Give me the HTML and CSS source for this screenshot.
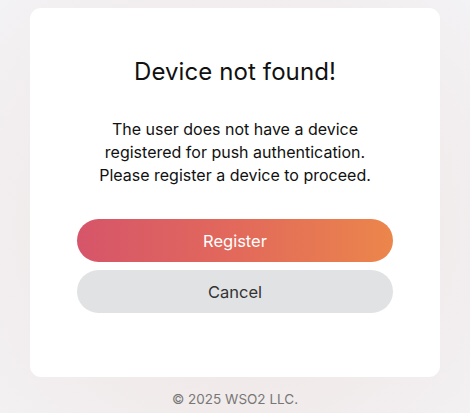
FILE: index.html
```html
<!DOCTYPE html>
<html>
<head>
<meta charset="utf-8">
<link rel="stylesheet" href="styles.css">
</head>
<body>
<div class="page">
  <div class="card">
    <h1 class="title">Device not found!</h1>
    <p class="message">The user does not have a device<br>registered for push authentication.<br>Please register a device to proceed.</p>
    <div class="actions">
      <button class="btn btn-primary">Register</button>
      <button class="btn btn-secondary">Cancel</button>
    </div>
  </div>
  <footer class="footer">© 2025 WSO2 LLC.</footer>
</div>
</body>
</html>
```
FILE: styles.css
```css
html, body {
  margin: 0;
  padding: 0;
  height: 100%;
}
body {
  font-family: "Inter", "Liberation Sans", sans-serif;
  background: radial-gradient(ellipse at 50% 55%, #efe3e2 0%, #f1ebeb 55%, #f3f2f4 100%);
  color: #111;
}
.page {
  display: flex;
  flex-direction: column;
  align-items: center;
  padding-top: 8px;
}
.card {
  box-sizing: border-box;
  width: 410px;
  height: 369px;
  background: #fff;
  border-radius: 11px;
  padding: 50px 47px 0;
  display: flex;
  flex-direction: column;
  align-items: center;
}
.title {
  margin: 0;
  font-size: 24px;
  font-weight: 400;
  line-height: 28px;
  letter-spacing: 0.1px;
  color: #111;
}
.message {
  margin: 32px 0 0;
  font-size: 16px;
  line-height: 23px;
  text-align: center;
  color: #111;
}
.actions {
  margin-top: 32px;
  width: 100%;
  display: flex;
  flex-direction: column;
  gap: 8px;
}
.btn {
  height: 43px;
  border: none;
  border-radius: 22px;
  font-family: inherit;
  font-size: 16.5px;
  cursor: pointer;
}
.btn-primary {
  background: linear-gradient(90deg, #d6556a 0%, #e2695b 50%, #eb864b 100%);
  color: #fff;
}
.btn-secondary {
  background: #e1e2e4;
  color: #333;
}
.footer {
  margin-top: 14px;
  font-size: 13.5px;
  color: #777;
}
```
